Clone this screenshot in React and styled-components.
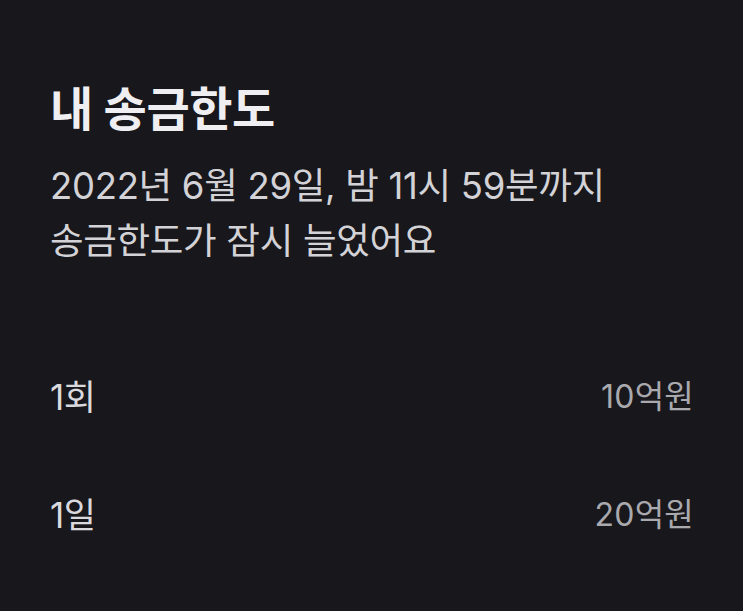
import styled, { createGlobalStyle } from 'styled-components';

const GlobalStyle = createGlobalStyle`
  html, body {
    margin: 0;
    padding: 0;
    background: #18171c;
  }
  body {
    font-family: Inter, "Noto Sans CJK KR", sans-serif;
  }
`

const Root = styled.div`
  width: 743px;
  height: 611px;
  box-sizing: border-box;
  padding: 79px 49px 0 50px;
  background: #18171c;
`
const Title = styled.h1`
  margin: 0;
  font-size: 47px;
  font-weight: 700;
  line-height: 60px;
  color: #efeff2;
  letter-spacing: -0.4px;
`
const Desc = styled.p`
  margin: 20px 0 0;
  font-size: 36.5px;
  font-weight: 400;
  line-height: 55px;
  color: #d3d3d7;
  letter-spacing: -0.3px;
`
const LimitList = styled.div`
  margin-top: 97px;
  display: flex;
  flex-direction: column;
  gap: 62px;
`
const LimitRow = styled.div`
  display: flex;
  justify-content: space-between;
  align-items: center;
  height: 56px;
`
const LimitLabel = styled.span`
  font-size: 35px;
  color: #dadade;
  letter-spacing: -0.5px;
`
const LimitValue = styled.span`
  font-size: 32px;
  color: #a9a9ae;
  letter-spacing: 0.2px;
`

const limits = [
  { label: '1회', value: '10억원' },
  { label: '1일', value: '20억원' },
];

const App = () => {
  return <Root>
    <GlobalStyle />
    <Title>내 송금한도</Title>
    <Desc>2022년 6월 29일, 밤 11시 59분까지<br />송금한도가 잠시 늘었어요</Desc>
    <LimitList>
      {limits.map(item => (
        <LimitRow key={item.label}>
          <LimitLabel>{item.label}</LimitLabel>
          <LimitValue>{item.value}</LimitValue>
        </LimitRow>
      ))}
    </LimitList>
  </Root>
}
export default App;
